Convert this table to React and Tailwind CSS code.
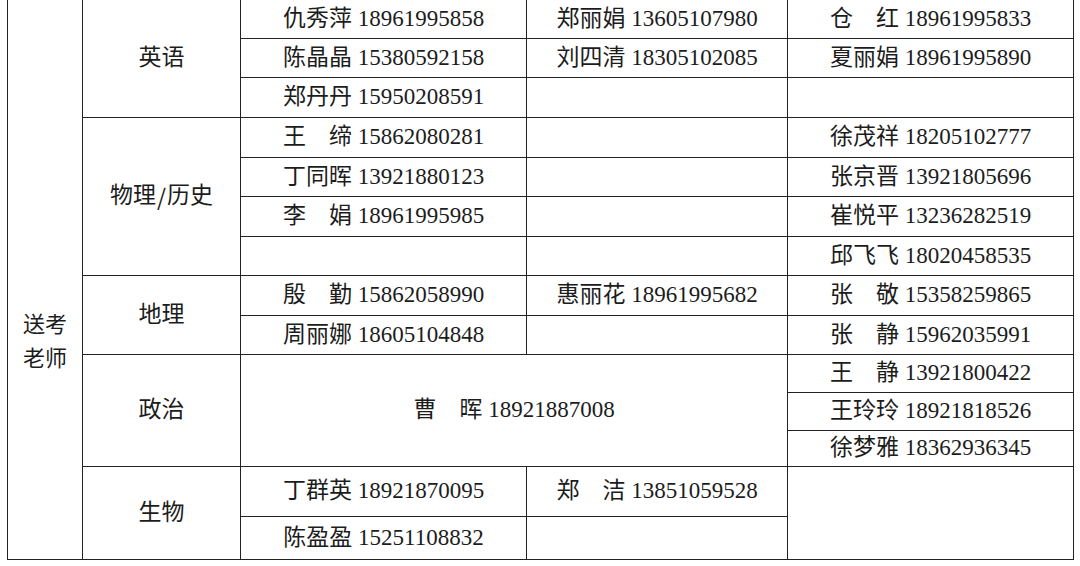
const rows = [
    ['仇秀萍 18961995858', '郑丽娟 13605107980', '仓　红 18961995833'],
    ['陈晶晶 15380592158', '刘四清 18305102085', '夏丽娟 18961995890'],
    ['郑丹丹 15950208591', '', ''],
    ['王　缔 15862080281', '', '徐茂祥 18205102777'],
    ['丁同晖 13921880123', '', '张京晋 13921805696'],
    ['李　娟 18961995985', '', '崔悦平 13236282519'],
    ['', '', '邱飞飞 18020458535'],
    ['殷　勤 15862058990', '惠丽花 18961995682', '张　敬 15358259865'],
    ['周丽娜 18605104848', '', '张　静 15962035991'],
];

const Cell = ({ children, className = '' }) => (
    <div className={`flex items-center justify-center border-r border-b border-[#222] whitespace-nowrap ${className}`}>
        {children}
    </div>
);

export default function App() {
    return (
        <div className="w-[1080px] h-[566px] bg-white overflow-hidden text-[23px] text-[#1c1c1c] font-['Liberation_Serif','Noto_Sans_CJK_SC',serif]">
            <div className="ml-[7px] w-fit border-l border-[#222] grid grid-cols-[75px_158px_286px_261px_286px] grid-rows-[39px_39px_40px_40px_39px_40px_39px_40px_39px_38px_38px_36px_50px_43px]">

                <div className="row-start-1 row-span-14 col-start-1 border-r border-b border-[#222] flex flex-col items-center pt-[308px] leading-[34px] text-[22px]">
                    <span>送考</span>
                    <span>老师</span>
                </div>

                <Cell className="col-start-2 row-start-1 row-span-3">英语</Cell>
                <Cell className="col-start-2 row-start-4 row-span-4">
                    物理<span className="font-['Noto_Sans_CJK_SC',sans-serif] px-[1px]">/</span>历史
                </Cell>
                <Cell className="col-start-2 row-start-8 row-span-2">地理</Cell>
                <Cell className="col-start-2 row-start-10 row-span-3">政治</Cell>
                <Cell className="col-start-2 row-start-13 row-span-2">生物</Cell>

                {rows.map((row, i) =>
                    row.map((text, j) => (
                        <Cell
                            key={`${i}-${j}`}
                            className={`${['col-start-3', 'col-start-4', 'col-start-5'][j]} ${['row-start-1', 'row-start-2', 'row-start-3', 'row-start-4', 'row-start-5', 'row-start-6', 'row-start-7', 'row-start-8', 'row-start-9'][i]}`}
                        >
                            {text}
                        </Cell>
                    ))
                )}

                <Cell className="col-start-3 col-span-2 row-start-10 row-span-3">曹　晖 18921887008</Cell>
                <Cell className="col-start-5 row-start-10">王　静 13921800422</Cell>
                <Cell className="col-start-5 row-start-11">王玲玲 18921818526</Cell>
                <Cell className="col-start-5 row-start-12">徐梦雅 18362936345</Cell>

                <Cell className="col-start-3 row-start-13">丁群英 18921870095</Cell>
                <Cell className="col-start-4 row-start-13">郑　洁 13851059528</Cell>
                <Cell className="col-start-5 row-start-13 row-span-2"></Cell>
                <Cell className="col-start-3 row-start-14">陈盈盈 15251108832</Cell>
                <Cell className="col-start-4 row-start-14"></Cell>
            </div>
        </div>
    );
}
